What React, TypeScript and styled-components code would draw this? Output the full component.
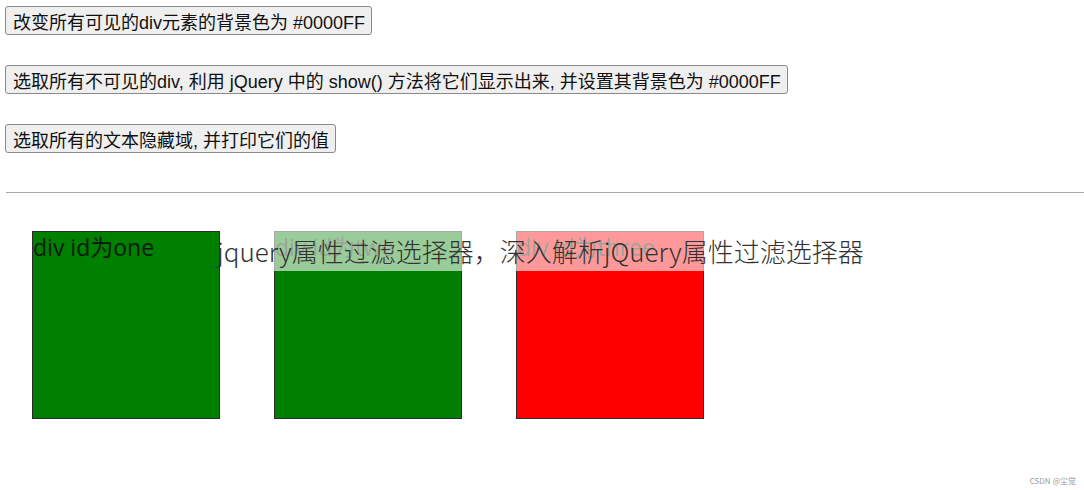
import React from 'react';
import styled, { createGlobalStyle } from 'styled-components';

const GlobalStyle = createGlobalStyle`
  html, body {
    margin: 0;
    padding: 0;
    background: #fff;
  }
  body {
    width: 1084px;
    height: 490px;
    overflow: hidden;
    font-family: "Liberation Sans", "Noto Sans CJK SC", sans-serif;
  }
`;

const Page = styled.div`
  position: relative;
  height: 490px;
  padding-top: 6px;
  box-sizing: border-box;
`;

const Controls = styled.div`
  display: flex;
  flex-direction: column;
  align-items: flex-start;
  gap: 30px;
  padding-left: 5px;
`;

const Button = styled.button`
  height: 29px;
  padding: 0 6px 0 7px;
  font-family: "Liberation Sans", "Noto Sans CJK SC", sans-serif;
  font-size: 18px;
  color: #111;
  background: #efefef;
  border: 1px solid #8a8a8a;
  border-radius: 3px;
  white-space: nowrap;
`;

const Rule = styled.hr`
  margin: 39px 0 0 6px;
  border: none;
  border-top: 1px solid #a8a8a8;
  height: 0;
`;

const Stage = styled.div`
  position: relative;
  display: flex;
  gap: 54px;
  padding-left: 32px;
  margin-top: 38px;
`;

const Box = styled.div<{ $color: string }>`
  width: 188px;
  height: 188px;
  box-sizing: border-box;
  border: 1px solid #2a2a2a;
  background: ${(p) => p.$color};
  font-family: "Open Sans", "Noto Sans CJK SC", sans-serif;
  font-size: 23px;
  line-height: 30px;
  color: #0a1a0a;
  white-space: nowrap;
  overflow: hidden;
`;

const TitleBand = styled.div`
  position: absolute;
  left: 222px;
  top: 0;
  width: 650px;
  height: 40px;
  background: rgba(255, 255, 255, 0.6);
`;

const Title = styled.div`
  position: absolute;
  left: 217px;
  top: 2px;
  font-family: "Noto Sans CJK SC", "Noto Sans", sans-serif;
  font-weight: 300;
  font-size: 26px;
  line-height: 36px;
  color: #333;
  white-space: nowrap;
`;

const Watermark = styled.div`
  position: absolute;
  right: 8px;
  bottom: 4px;
  font-family: "Noto Sans CJK SC", sans-serif;
  font-size: 8px;
  color: #999;
`;

export default function App() {
  return (
    <Page>
      <GlobalStyle />
      <Controls>
        <Button>改变所有可见的div元素的背景色为 #0000FF</Button>
        <Button>选取所有不可见的div, 利用 jQuery 中的 show() 方法将它们显示出来, 并设置其背景色为 #0000FF</Button>
        <Button>选取所有的文本隐藏域, 并打印它们的值</Button>
      </Controls>
      <Rule />
      <Stage>
        <Box $color="#008000">div id为one</Box>
        <Box $color="#008000">div id为two</Box>
        <Box $color="#ff0000">div id为three</Box>
        <TitleBand />
        <Title>jquery属性过滤选择器，深入解析jQuery属性过滤选择器</Title>
      </Stage>
      <Watermark>CSDN @尘觉</Watermark>
    </Page>
  );
}
